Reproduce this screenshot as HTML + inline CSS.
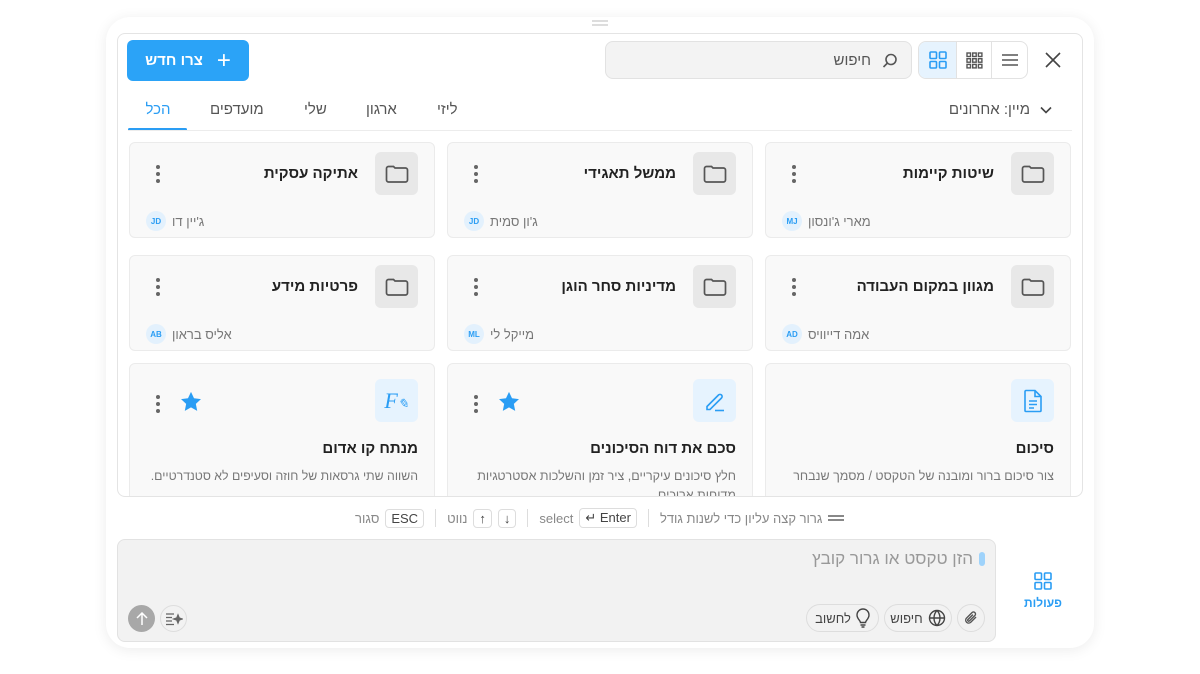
<!DOCTYPE html>
<html dir="rtl"><head><meta charset="utf-8"><style>
*{box-sizing:border-box;margin:0;padding:0}
body{width:1200px;height:674px;background:#fff;font-family:"Liberation Sans","Noto Sans CJK SC",sans-serif;position:relative;overflow:hidden;color:#222}
.a{position:absolute}
.outer{left:106px;top:17px;width:988px;height:631px;border-radius:24px;background:#fff;box-shadow:0 2px 14px rgba(0,0,0,.08)}
.panel{left:117px;top:33px;width:966px;height:464px;border:1px solid #e4e4e4;border-radius:8px;background:#fff;overflow:hidden}
.card{position:absolute;width:306px;background:#f9f9f9;border:1px solid #ebebeb;border-radius:6px}
.ib{position:absolute;right:16px;top:9px;width:43px;height:43px;border-radius:6px;background:#e8e8e8;display:flex;align-items:center;justify-content:center}
.ib.b{background:#e6f3fe}
.t{position:absolute;right:76px;top:22px;font-size:15px;font-weight:bold;color:#222;white-space:nowrap}
.dots{position:absolute;left:26px;top:22px;width:4px}
.dots i{display:block;width:4px;height:4px;border-radius:50%;background:#666;margin-bottom:3px}
.own{position:absolute;left:16px;top:68px;display:flex;align-items:center;direction:ltr;font-size:13px;color:#777}
.av{width:20px;height:20px;border-radius:50%;background:#e3f1fd;color:#2a9df4;font-size:8px;font-weight:bold;display:flex;align-items:center;justify-content:center;margin-right:6px}
.desc{position:absolute;right:16px;left:10px;top:104px;font-size:12.5px;color:#777;line-height:19px}
.kbd{display:inline-block;border:1px solid #ddd;border-radius:4px;padding:1px 5px;font-size:13px;color:#444;background:#fff}
</style></head><body>
<div class="a outer"></div>
<div class="a" style="left:592px;top:20px;width:16px;height:2px;background:#ddd;box-shadow:0 4px 0 #ddd"></div>
<div class="a panel">
 <div class="a" style="left:9px;top:6px;width:122px;height:41px;background:#2ba3f7;border-radius:6px;color:#fff;font-size:15px;font-weight:bold;display:flex;align-items:center;justify-content:center;gap:14px;direction:ltr"><span style="font-size:24px;font-weight:normal;order:2">+</span><span style="order:1">צרו חדש</span></div>
 <div class="a" style="left:487px;top:7px;width:307px;height:38px;background:#f3f3f3;border:1px solid #e2e2e2;border-radius:8px"><svg class="a" style="right:12px;top:10px" width="18" height="18" viewBox="0 0 18 18" fill="none" stroke="#555" stroke-width="1.6"><circle cx="10" cy="7.5" r="5"/><path d="M6.5 11 2.5 15"/></svg><span class="a" style="right:40px;top:10px;font-size:15px;color:#555">חיפוש</span></div>
 <div class="a" style="left:800px;top:7px;width:110px;height:38px;border:1px solid #e2e2e2;border-radius:8px;overflow:hidden;display:flex;direction:ltr">
  <div style="width:37px;background:#e6f3fe;display:flex;align-items:center;justify-content:center"><svg width="18" height="18" viewBox="0 0 18 18" fill="none" stroke="#2a9df4" stroke-width="1.6"><rect x="1" y="1" width="6.5" height="6.5" rx="1"/><rect x="10.5" y="1" width="6.5" height="6.5" rx="1"/><rect x="1" y="10.5" width="6.5" height="6.5" rx="1"/><rect x="10.5" y="10.5" width="6.5" height="6.5" rx="1"/></svg></div>
  <div style="width:35px;border-left:1px solid #e2e2e2;display:flex;align-items:center;justify-content:center"><svg width="17" height="17" viewBox="0 0 17 17" fill="none" stroke="#555" stroke-width="1.4"><rect x="1" y="1" width="3.5" height="3.5"/><rect x="6.7" y="1" width="3.5" height="3.5"/><rect x="12.4" y="1" width="3.5" height="3.5"/><rect x="1" y="6.7" width="3.5" height="3.5"/><rect x="6.7" y="6.7" width="3.5" height="3.5"/><rect x="12.4" y="6.7" width="3.5" height="3.5"/><rect x="1" y="12.4" width="3.5" height="3.5"/><rect x="6.7" y="12.4" width="3.5" height="3.5"/><rect x="12.4" y="12.4" width="3.5" height="3.5"/></svg></div>
  <div style="flex:1;border-left:1px solid #e2e2e2;display:flex;align-items:center;justify-content:center"><svg width="18" height="14" viewBox="0 0 18 14" stroke="#555" stroke-width="1.6"><path d="M1 2h16M1 7h16M1 12h16"/></svg></div>
 </div>
 <svg class="a" style="left:927px;top:18px" width="16" height="16" viewBox="0 0 16 16" stroke="#444" stroke-width="1.6"><path d="M1 1 15 15M15 1 1 15"/></svg>
 <div class="a" style="left:10px;top:67px;width:60px;text-align:center;font-size:15px;color:#2a9df4">הכל</div>
 <div class="a" style="left:10px;top:94px;width:59px;height:3px;background:#2a9df4;border-radius:2px"></div>
 <div class="a" style="left:92px;top:67px;font-size:15px;color:#555">מועדפים</div>
 <div class="a" style="left:186px;top:67px;font-size:15px;color:#555">שלי</div>
 <div class="a" style="left:248px;top:67px;font-size:15px;color:#555">ארגון</div>
 <div class="a" style="left:319px;top:67px;font-size:15px;color:#555">ליזי</div>
 <div class="a" style="right:30px;top:67px;font-size:15px;color:#555;display:flex;gap:10px;align-items:center"><svg width="12" height="8" viewBox="0 0 12 8" fill="none" stroke="#444" stroke-width="1.6" style="order:1"><path d="M1 1.5 6 6.5 11 1.5"/></svg><span style="order:2">מיין: אחרונים</span></div>
 <div class="a" style="left:10px;right:10px;top:96px;height:1px;background:#ececec"></div>
</div>
<div class="card" style="left:765px;top:142px;height:96px"><div class="ib"><svg width="24" height="20" viewBox="0 0 24 20" fill="none" stroke="#555" stroke-width="1.7"><path d="M1.5 4.5a2 2 0 0 1 2-2h5l1.5 1.5h10.5a2 2 0 0 1 2 2v10a2 2 0 0 1-2 2h-17a2 2 0 0 1-2-2z"/></svg></div><div class="t">שיטות קיימות</div><div class="dots"><i></i><i></i><i></i></div><div class="own"><div class="av">MJ</div><span>מארי ג'ונסון</span></div></div>
<div class="card" style="left:447px;top:142px;height:96px"><div class="ib"><svg width="24" height="20" viewBox="0 0 24 20" fill="none" stroke="#555" stroke-width="1.7"><path d="M1.5 4.5a2 2 0 0 1 2-2h5l1.5 1.5h10.5a2 2 0 0 1 2 2v10a2 2 0 0 1-2 2h-17a2 2 0 0 1-2-2z"/></svg></div><div class="t">ממשל תאגידי</div><div class="dots"><i></i><i></i><i></i></div><div class="own"><div class="av">JD</div><span>ג'ון סמית</span></div></div>
<div class="card" style="left:129px;top:142px;height:96px"><div class="ib"><svg width="24" height="20" viewBox="0 0 24 20" fill="none" stroke="#555" stroke-width="1.7"><path d="M1.5 4.5a2 2 0 0 1 2-2h5l1.5 1.5h10.5a2 2 0 0 1 2 2v10a2 2 0 0 1-2 2h-17a2 2 0 0 1-2-2z"/></svg></div><div class="t">אתיקה עסקית</div><div class="dots"><i></i><i></i><i></i></div><div class="own"><div class="av">JD</div><span>ג'יין דו</span></div></div>
<div class="card" style="left:765px;top:255px;height:96px"><div class="ib"><svg width="24" height="20" viewBox="0 0 24 20" fill="none" stroke="#555" stroke-width="1.7"><path d="M1.5 4.5a2 2 0 0 1 2-2h5l1.5 1.5h10.5a2 2 0 0 1 2 2v10a2 2 0 0 1-2 2h-17a2 2 0 0 1-2-2z"/></svg></div><div class="t">מגוון במקום העבודה</div><div class="dots"><i></i><i></i><i></i></div><div class="own"><div class="av">AD</div><span>אמה דייוויס</span></div></div>
<div class="card" style="left:447px;top:255px;height:96px"><div class="ib"><svg width="24" height="20" viewBox="0 0 24 20" fill="none" stroke="#555" stroke-width="1.7"><path d="M1.5 4.5a2 2 0 0 1 2-2h5l1.5 1.5h10.5a2 2 0 0 1 2 2v10a2 2 0 0 1-2 2h-17a2 2 0 0 1-2-2z"/></svg></div><div class="t">מדיניות סחר הוגן</div><div class="dots"><i></i><i></i><i></i></div><div class="own"><div class="av">ML</div><span>מייקל לי</span></div></div>
<div class="card" style="left:129px;top:255px;height:96px"><div class="ib"><svg width="24" height="20" viewBox="0 0 24 20" fill="none" stroke="#555" stroke-width="1.7"><path d="M1.5 4.5a2 2 0 0 1 2-2h5l1.5 1.5h10.5a2 2 0 0 1 2 2v10a2 2 0 0 1-2 2h-17a2 2 0 0 1-2-2z"/></svg></div><div class="t">פרטיות מידע</div><div class="dots"><i></i><i></i><i></i></div><div class="own"><div class="av">AB</div><span>אליס בראון</span></div></div>
<div class="a" style="left:118px;top:360px;width:964px;height:136px;overflow:hidden">
 <div class="card" style="left:647px;top:3px;height:150px"><div class="ib b" style="top:15px"><svg width="20" height="24" viewBox="0 0 20 24" fill="none" stroke="#2a9df4" stroke-width="1.6"><path d="M2 2.5a1 1 0 0 1 1-1h9l6 6v14a1 1 0 0 1-1 1H3a1 1 0 0 1-1-1z"/><path d="M12 1.5v6h6M6 12h8M6 15.5h8M6 19h5"/></svg></div><div class="t" style="top:76px;right:16px">סיכום</div><div class="desc" style="top:103px">צור סיכום ברור ומובנה של הטקסט / מסמך שנבחר</div></div>
 <div class="card" style="left:329px;top:3px;height:150px"><div class="ib b" style="top:15px"><svg width="22" height="22" viewBox="0 0 22 22" fill="none" stroke="#2a9df4" stroke-width="1.6"><path d="M3 16.5 14.5 5a2 2 0 0 1 3 3L6 19.5H3z"/><path d="M11 20.5h9"/></svg></div><div class="t" style="top:76px;right:16px">סכם את דוח הסיכונים</div><svg class="a" style="left:50px;top:27px" width="22" height="21" viewBox="0 0 24 23"><path fill="#2a9df4" d="M12 1l3.3 7 7.6.9-5.6 5.2 1.5 7.6L12 17.9 5.2 21.7l1.5-7.6L1.1 8.9 8.7 8z"/></svg><div class="dots" style="top:31px"><i></i><i></i><i></i></div><div class="desc" style="top:103px;left:20px">חלץ סיכונים עיקריים, ציר זמן והשלכות אסטרטגיות מדוחות ארוכים</div></div>
 <div class="card" style="left:11px;top:3px;height:150px"><div class="ib b" style="top:15px"><span style="font-family:'Liberation Serif',serif;font-style:italic;color:#2a9df4;font-size:22px;direction:ltr">F<span style="font-size:13px">✎</span></span></div><div class="t" style="top:76px;right:16px">מנתח קו אדום</div><svg class="a" style="left:50px;top:27px" width="22" height="21" viewBox="0 0 24 23"><path fill="#2a9df4" d="M12 1l3.3 7 7.6.9-5.6 5.2 1.5 7.6L12 17.9 5.2 21.7l1.5-7.6L1.1 8.9 8.7 8z"/></svg><div class="dots" style="top:31px"><i></i><i></i><i></i></div><div class="desc" style="top:103px;left:4px;font-size:12.3px;white-space:nowrap">השווה שתי גרסאות של חוזה וסעיפים לא סטנדרטיים.</div></div>
</div>
<div class="a" style="left:355px;top:507px;height:22px;display:flex;align-items:center;gap:6px;direction:ltr;font-size:13px;color:#888;white-space:nowrap">
 <span>סגור</span><span class="kbd">ESC</span><span style="width:1px;height:18px;background:#ddd;margin:0 5px"></span>
 <span>נווט</span><span class="kbd">↑</span><span class="kbd">↓</span><span style="width:1px;height:18px;background:#ddd;margin:0 5px"></span>
 <span>select</span><span class="kbd">↵ Enter</span><span style="width:1px;height:18px;background:#ddd;margin:0 5px"></span>
 <span>גרור קצה עליון כדי לשנות גודל</span><span style="display:inline-block;width:16px;height:2px;background:#888;box-shadow:0 4px 0 #888;margin-top:-4px"></span>
</div>
<div class="a" style="left:117px;top:539px;width:879px;height:103px;background:#f2f2f2;border:1px solid #e2e2e2;border-radius:8px">
 <div class="a" style="right:10px;top:9px;font-size:17px;color:#999;display:flex;align-items:center;gap:6px"><span style="width:6px;height:14px;background:#9fd3fb;border-radius:3px"></span>הזן טקסט או גרור קובץ</div>
 <div class="a" style="right:10px;top:64px;width:28px;height:28px;border:1px solid #ddd;border-radius:14px;display:flex;align-items:center;justify-content:center"><svg width="16" height="16" viewBox="0 0 16 16" fill="none" stroke="#555" stroke-width="1.4"><path d="M13 7 7.5 12.5a3 3 0 0 1-4.2-4.2L9 2.6a2 2 0 0 1 2.9 2.9L6.3 11a1 1 0 0 1-1.4-1.4l5-5"/></svg></div>
 <div class="a" style="right:43px;top:64px;width:68px;height:28px;border:1px solid #ddd;border-radius:14px;display:flex;align-items:center;justify-content:center;gap:5px;font-size:13px;color:#444"><svg width="18" height="18" viewBox="0 0 18 18" fill="none" stroke="#444" stroke-width="1.4"><circle cx="9" cy="9" r="7.5"/><path d="M1.5 9h15M9 1.5c-4 4-4 11 0 15M9 1.5c4 4 4 11 0 15"/></svg>חיפוש</div>
 <div class="a" style="right:116px;top:64px;width:73px;height:28px;border:1px solid #ddd;border-radius:14px;display:flex;align-items:center;justify-content:center;gap:5px;font-size:13px;color:#444"><svg width="14" height="20" viewBox="0 0 14 20" fill="none" stroke="#444" stroke-width="1.4"><path d="M4.5 14.5c0-2-3.5-3.5-3.5-7.5a6 6 0 0 1 12 0c0 4-3.5 5.5-3.5 7.5zM4.5 17h5M5.5 19h3"/></svg>לחשוב</div>
 <div class="a" style="left:10px;top:65px;width:27px;height:27px;border-radius:50%;background:#a8a8a8;display:flex;align-items:center;justify-content:center"><svg width="12" height="14" viewBox="0 0 12 14" fill="none" stroke="#fff" stroke-width="1.5"><path d="M6 13V1M1 6l5-5 5 5"/></svg></div>
 <div class="a" style="left:42px;top:65px;width:27px;height:27px;border-radius:50%;border:1px solid #ddd;display:flex;align-items:center;justify-content:center"><svg width="18" height="14" viewBox="0 0 18 14" fill="none" stroke="#666" stroke-width="1.3"><path d="M1 2h8M1 5.5h6M1 9h6M1 12.5h8"/><path d="M13 3l1.2 3 3 1-3 1L13 11l-1.2-3-3-1 3-1z" fill="#666"/></svg></div>
</div>
<svg class="a" style="left:1034px;top:572px" width="18" height="18" viewBox="0 0 18 18" fill="none" stroke="#2a9df4" stroke-width="1.6"><rect x="1" y="1" width="6.5" height="6.5" rx="1"/><rect x="10.5" y="1" width="6.5" height="6.5" rx="1"/><rect x="1" y="10.5" width="6.5" height="6.5" rx="1"/><rect x="10.5" y="10.5" width="6.5" height="6.5" rx="1"/></svg>
<div class="a" style="left:1018px;top:596px;width:50px;text-align:center;font-size:12px;color:#2a9df4;font-weight:bold">פעולות</div>
</body></html>
